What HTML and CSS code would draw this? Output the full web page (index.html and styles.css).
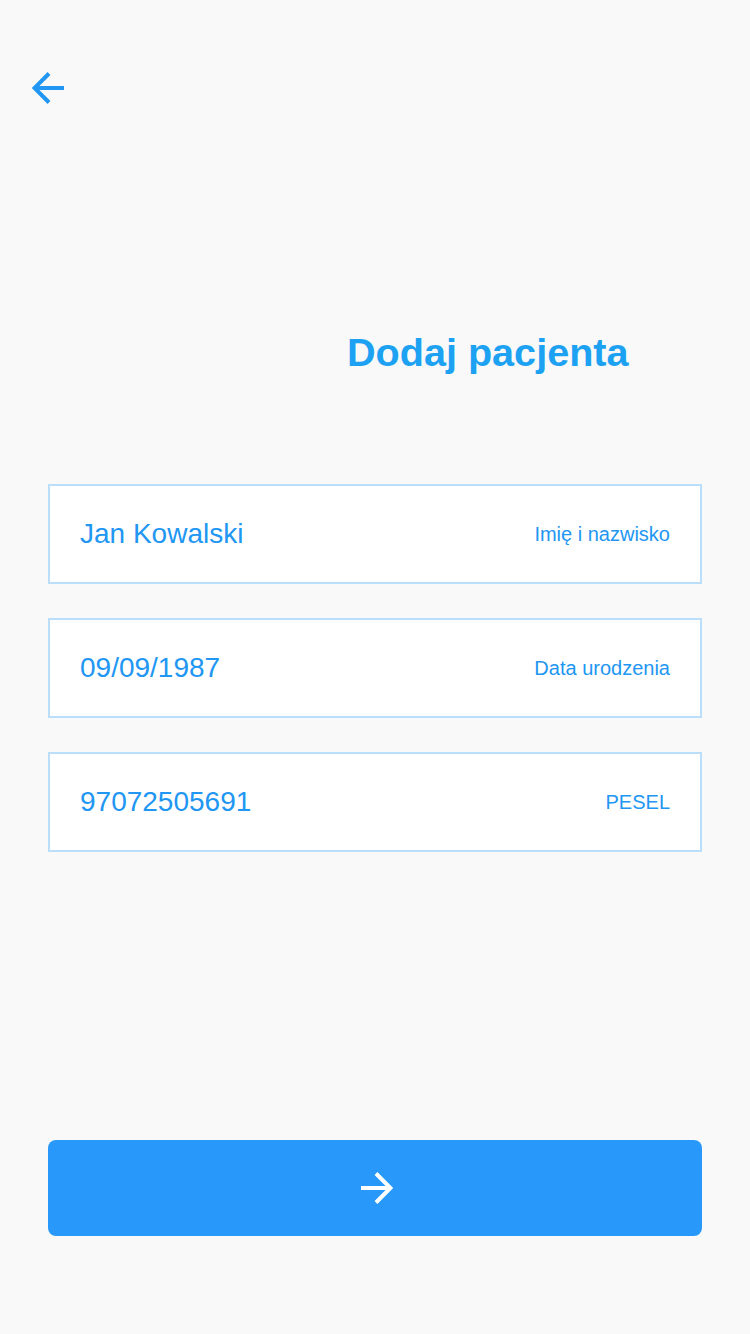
FILE: index.html
```html
<!DOCTYPE html>
<html lang="pl">
<head>
<meta charset="utf-8">
<title>Dodaj pacjenta</title>
<link rel="stylesheet" href="styles.css">
</head>
<body>
<div class="page">
  <header class="header">
    <button class="back" aria-label="Wstecz">
      <svg width="34" height="32" viewBox="0 0 34 32" fill="none" stroke="#2196f3" stroke-width="4">
        <polyline points="17,1.5 2.5,16 17,30.5" stroke-linejoin="miter"/>
        <line x1="2.5" y1="16" x2="32" y2="16"/>
      </svg>
    </button>
  </header>
  <h1 class="title">Dodaj pacjenta</h1>
  <form class="form">
    <div class="field"><span class="value">Jan Kowalski</span><span class="label">Imię i nazwisko</span></div>
    <div class="field"><span class="value">09/09/1987</span><span class="label">Data urodzenia</span></div>
    <div class="field"><span class="value">97072505691</span><span class="label">PESEL</span></div>
  </form>
  <button class="next" aria-label="Dalej">
    <svg width="34" height="32" viewBox="0 0 34 32" fill="none" stroke="#ffffff" stroke-width="4">
      <polyline points="17,1.5 31.5,16 17,30.5" stroke-linejoin="miter"/>
      <line x1="2" y1="16" x2="31.5" y2="16"/>
    </svg>
  </button>
</div>
</body>
</html>
```
FILE: styles.css
```css
* { box-sizing: border-box; }
html, body { margin: 0; padding: 0; }
body {
  background: #f9f9f9;
  font-family: "Liberation Sans", Arial, sans-serif;
  width: 750px;
  height: 1334px;
}
.page {
  display: flex;
  flex-direction: column;
  padding: 0 48px;
}
.header {
  padding-top: 72px;
  margin-left: -16px;
  display: flex;
}
.back {
  border: 0;
  background: none;
  padding: 0;
  width: 34px;
  height: 32px;
  display: block;
}
.back svg, .next svg { display: block; }
.title {
  margin: 225px 0 0 299px;
  font-size: 39.6px;
  line-height: 46px;
  font-weight: bold;
  color: #1da1f2;
}
.form {
  margin-top: 109px;
  display: flex;
  flex-direction: column;
  gap: 34px;
}
.field {
  height: 100px;
  background: #ffffff;
  border: 2px solid #bbdefb;
  display: flex;
  align-items: center;
  justify-content: space-between;
  padding: 0 30px;
}
.value {
  font-size: 28px;
  color: #2196f3;
}
.label {
  font-size: 20px;
  color: #2196f3;
}
.next {
  margin-top: 288px;
  height: 96px;
  border: 0;
  border-radius: 8px;
  background: #2899fa;
  display: flex;
  align-items: center;
  justify-content: center;
  padding: 0;
  width: 100%;
}
.next svg { margin-left: 2px; }
```
